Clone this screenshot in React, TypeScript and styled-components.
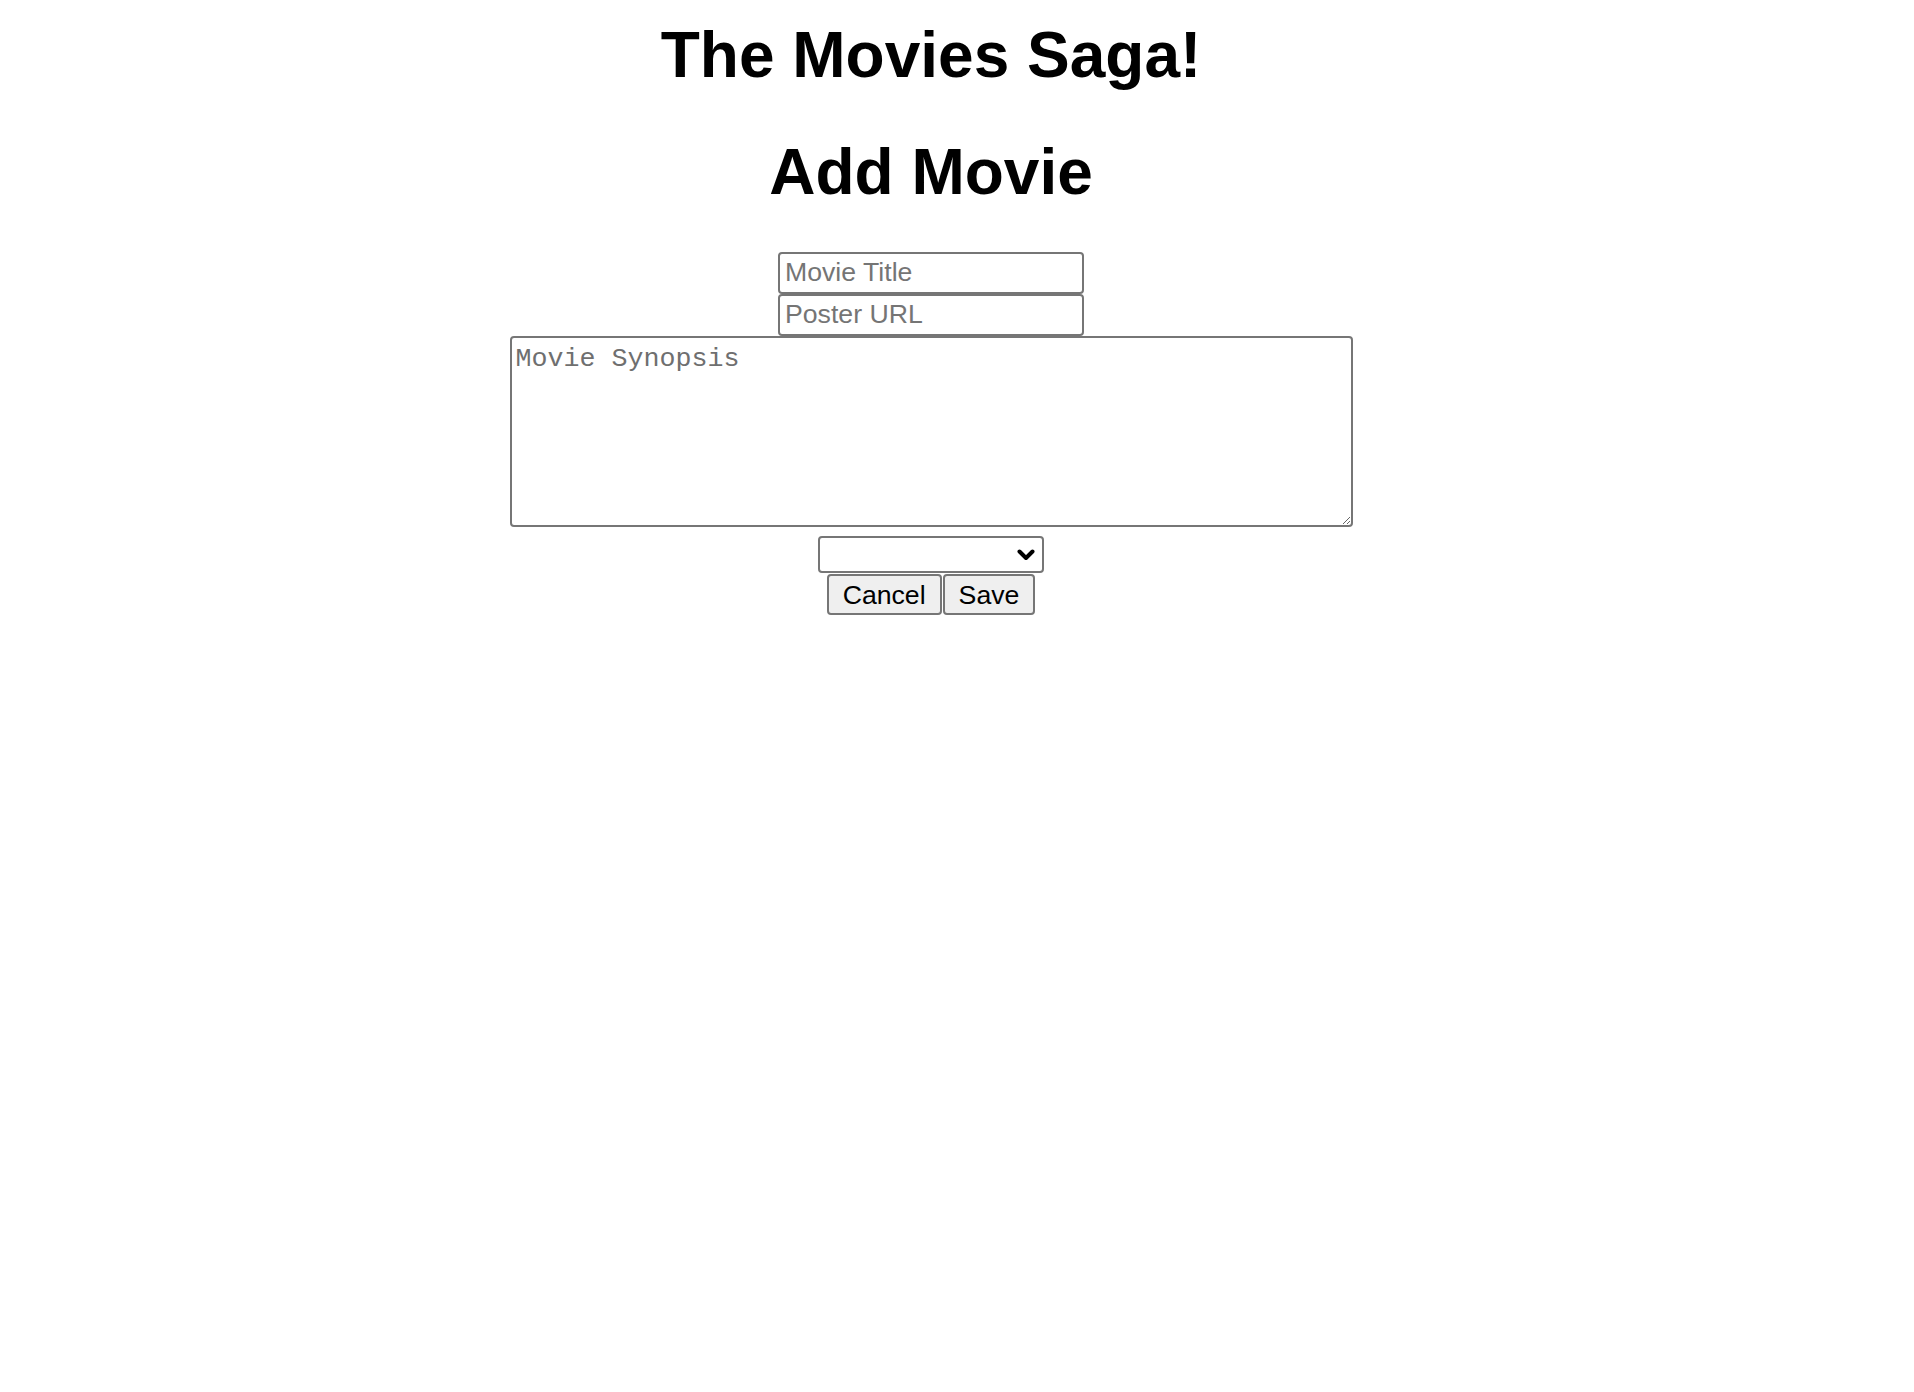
import React from "react";
import styled, { createGlobalStyle } from "styled-components";

const GlobalStyle = createGlobalStyle`
  html, body {
    margin: 0;
    padding: 0;
    background: #ffffff;
  }
  body {
    font-family: "Liberation Sans", Arial, sans-serif;
    color: #000;
  }
  * { box-sizing: border-box; }
`;

const Page = styled.div`
  display: flex;
  flex-direction: column;
  align-items: center;
  padding: 18px 52px 0 0;
`;

const Heading = styled.h1`
  margin: 0 0 43px;
  font-family: "Liberation Sans", Arial, sans-serif;
  font-weight: 700;
  font-size: 64px;
  line-height: 74px;
  text-align: center;
`;

const Form = styled.form`
  display: flex;
  flex-direction: column;
  align-items: center;
`;

const TextInput = styled.input`
  width: 306px;
  height: 42px;
  margin: 0;
  padding: 1px 5px 3px;
  border: 2px solid #767676;
  border-radius: 4px;
  background: #fff;
  font-family: "Liberation Sans", Arial, sans-serif;
  font-size: 26.67px;
  color: #000;
  outline: none;
  &::placeholder {
    color: #757575;
  }
`;

const Synopsis = styled.textarea`
  width: 843px;
  height: 191px;
  margin: 0;
  padding: 5px 4px 2px;
  border: 2px solid #767676;
  border-radius: 4px;
  background: #fff;
  font-family: "Liberation Mono", "Courier New", monospace;
  font-size: 26.67px;
  line-height: 32px;
  color: #000;
  outline: none;
  resize: both;
  &::placeholder {
    color: #6f6f6f;
  }
`;

const SelectWrap = styled.div`
  position: relative;
  margin-top: 9px;
  width: 226px;
  height: 37px;
`;

const Select = styled.select`
  appearance: none;
  -webkit-appearance: none;
  width: 100%;
  height: 100%;
  margin: 0;
  padding: 2px 40px 2px 8px;
  border: 2px solid #767676;
  border-radius: 4px;
  background: #fff;
  font-family: "Liberation Sans", Arial, sans-serif;
  font-size: 26.67px;
  color: #000;
  outline: none;
`;

const Chevron = styled.svg`
  position: absolute;
  right: 9px;
  top: 50%;
  transform: translateY(-50%);
  pointer-events: none;
`;

const ButtonRow = styled.div`
  display: flex;
  gap: 1px;
  margin-top: 1px;
`;

const Button = styled.button`
  height: 41px;
  margin: 0;
  padding: 2px 14px;
  border: 2px solid #767676;
  border-radius: 4px;
  background: #efefef;
  font-family: "Liberation Sans", Arial, sans-serif;
  font-size: 26.67px;
  line-height: 30px;
  color: #000;
  cursor: pointer;
`;

export default function App() {
  return (
    <>
      <GlobalStyle />
      <Page>
        <Heading>The Movies Saga!</Heading>
        <Heading>Add Movie</Heading>
        <Form onSubmit={(e) => e.preventDefault()}>
          <TextInput type="text" placeholder="Movie Title" />
          <TextInput type="text" placeholder="Poster URL" />
          <Synopsis placeholder="Movie Synopsis" />
          <SelectWrap>
            <Select defaultValue="">
              <option value=""></option>
            </Select>
            <Chevron width="18" height="12" viewBox="0 0 18 12" aria-hidden="true">
              <polyline
                points="2.5,2.5 9,9 15.5,2.5"
                fill="none"
                stroke="#000"
                strokeWidth="4"
                strokeLinecap="round"
                strokeLinejoin="round"
              />
            </Chevron>
          </SelectWrap>
          <ButtonRow>
            <Button type="button">Cancel</Button>
            <Button type="submit">Save</Button>
          </ButtonRow>
        </Form>
      </Page>
    </>
  );
}
